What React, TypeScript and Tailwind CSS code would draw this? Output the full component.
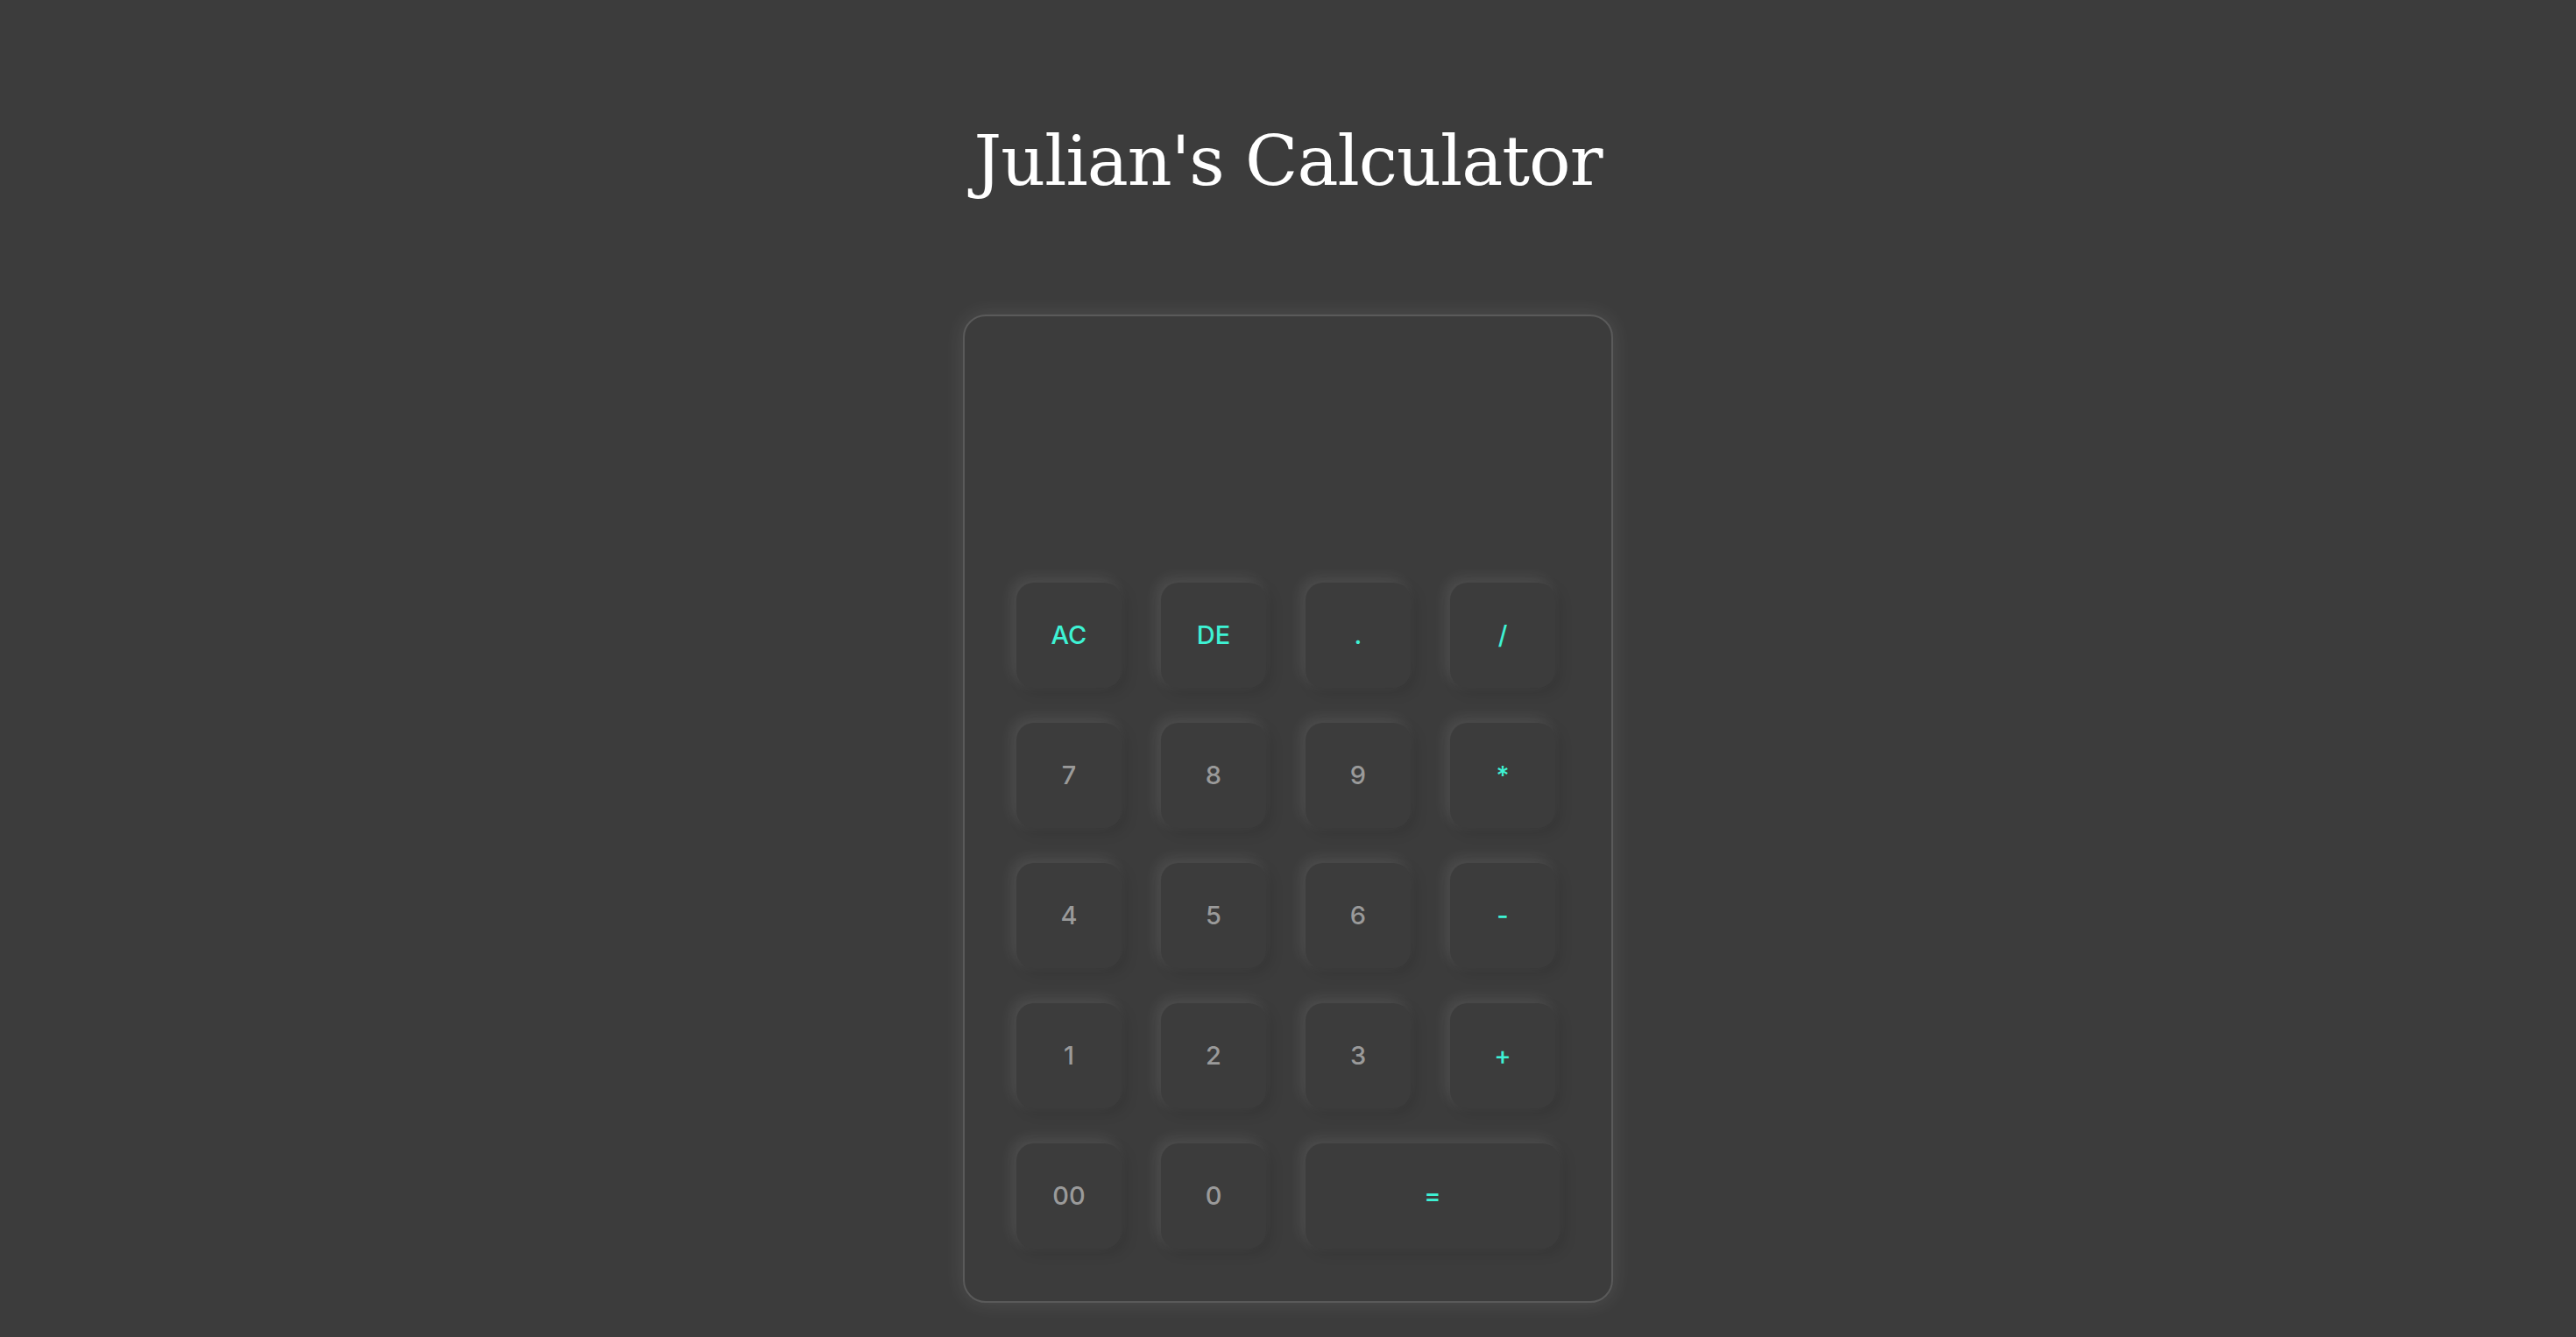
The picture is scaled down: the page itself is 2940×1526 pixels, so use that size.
import React from 'react';

type Key = {
  label: string;
  op?: boolean;
  wide?: boolean;
};

const keys: Key[] = [
  { label: 'AC', op: true },
  { label: 'DE', op: true },
  { label: '.', op: true },
  { label: '/', op: true },
  { label: '7' },
  { label: '8' },
  { label: '9' },
  { label: '*', op: true },
  { label: '4' },
  { label: '5' },
  { label: '6' },
  { label: '-', op: true },
  { label: '1' },
  { label: '2' },
  { label: '3' },
  { label: '+', op: true },
  { label: '00' },
  { label: '0' },
  { label: '=', op: true, wide: true },
];

function CalcKey({ k }: { k: Key }) {
  return (
    <button
      className={`h-[120px] ${k.wide ? 'col-span-2 w-[290px]' : 'w-[120px]'} flex items-center justify-center rounded-[20px] bg-[#3c3c3c] text-[29px] font-medium font-[Inter,'Liberation_Sans',sans-serif] ${
        k.op ? 'text-[#3ef2d4]' : 'text-[#9a9a9a]'
      } shadow-[-5px_-5px_16px_rgba(255,255,255,0.1),5px_5px_16px_rgba(0,0,0,0.12)]`}
    >
      {k.label}
    </button>
  );
}

export default function App() {
  return (
    <div className="min-h-screen bg-[#3c3c3c] flex flex-col items-center">
      {/* Title */}
      <h1 className="mt-[134px] text-white text-[79px] leading-[100px] font-['DejaVu_Serif',serif] font-normal tracking-[-1px]">
        Julian's Calculator
      </h1>

      {/* Calculator body */}
      <div className="mt-[125px] w-[742px] h-[1128px] rounded-[26px] border-2 border-[#5a5a5a] bg-[#3c3c3c] shadow-[0_0_24px_rgba(255,255,255,0.1)] flex flex-col justify-end pl-[59px] pr-[64px] pb-[60px]">
        <div className="grid grid-cols-[120px_120px_120px_120px] gap-x-[45px] gap-y-[40px]">
          {keys.map((k) => (
            <CalcKey key={k.label} k={k} />
          ))}
        </div>
      </div>
    </div>
  );
}
